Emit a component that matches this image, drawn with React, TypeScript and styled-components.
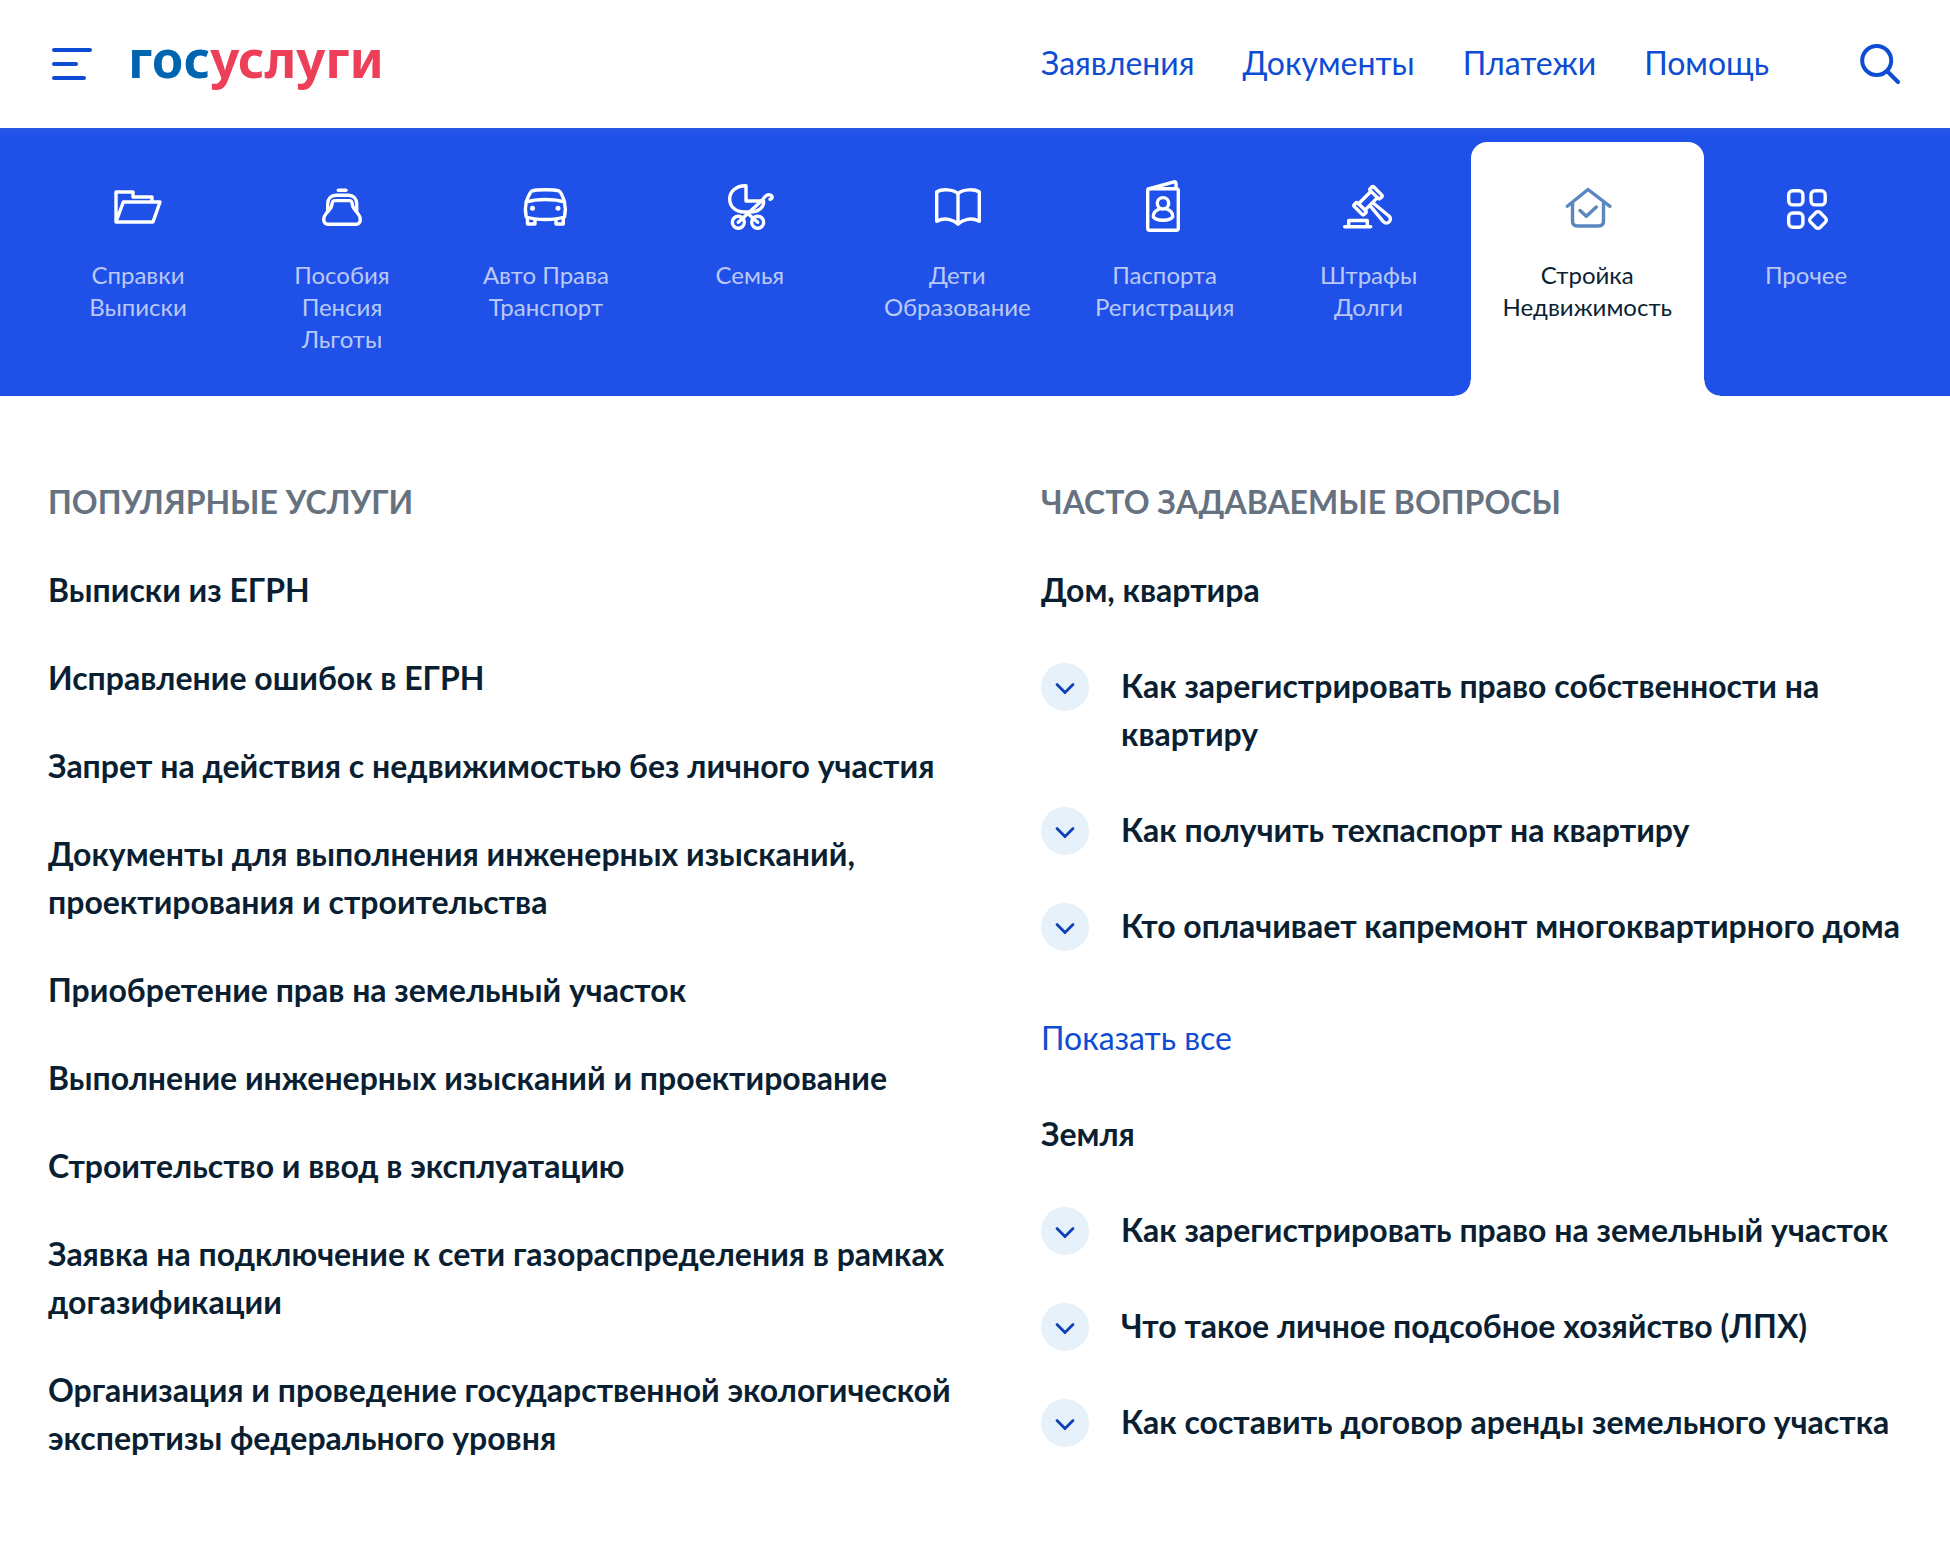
import React from "react";
import styled, { createGlobalStyle } from "styled-components";

const blue = "#0d4cd3";
const band = "#1f51e8";
const ink = "#0b1f33";

const GlobalStyle = createGlobalStyle`
  *, *::before, *::after { box-sizing: border-box; }
  body {
    margin: 0;
    background: #fff;
    color: ${ink};
    font-family: Lato, "Open Sans", sans-serif;
    font-size: 32px;
    line-height: 48px;
  }
  h1, h2, h3, ul { margin: 0; padding: 0; font: inherit; }
  ul { list-style: none; }
  a { color: inherit; text-decoration: none; }
  button { margin: 0; padding: 0; border: 0; background: none; color: inherit; font: inherit; cursor: pointer; }
  svg { display: block; }
`;

const Header = styled.header`
  display: grid;
  grid-template-columns: 1fr 1fr;
  align-items: center;
  height: 128px;
  padding: 0 48px;
`;

const Brand = styled.div`
  display: flex;
  align-items: center;
  gap: 32px;
`;

const IconButton = styled.button`
  flex: none;
  display: block;
  color: ${blue};
`;

const Logo = styled.a`
  padding-bottom: 12px;
  font-family: "Noto Sans", sans-serif;
  font-size: 51px;
  font-weight: 700;
  line-height: 64px;
  color: #0065b1;

  span { color: #ee3f58; }
`;

const HeaderRight = styled.div`
  display: flex;
  align-items: center;
  justify-content: space-between;
  padding-left: 66px;
`;

const MainNav = styled.nav`
  display: flex;
  gap: 48px;
  padding-bottom: 2px;
  color: ${blue};
`;

const Band = styled.nav`
  display: flex;
  padding: 14px 42px 0 36px;
  background: linear-gradient(#2857e7, ${band} 8px);
`;

const Tab = styled.button<{ $active?: boolean }>`
  position: relative;
  flex: 1 1 0;
  display: flex;
  flex-direction: column;
  align-items: center;
  gap: 19px;
  padding: 34px 32px 41px;
  border-radius: 16px 16px 0 0;
  background: ${(p) => (p.$active ? "#fff" : "transparent")};

  &::before,
  &::after {
    content: ${(p) => (p.$active ? '""' : "none")};
    position: absolute;
    bottom: 0;
    width: 16px;
    height: 16px;
  }
  &::before {
    right: 100%;
    background: radial-gradient(circle at 0 0, transparent 15px, #fff 16px);
  }
  &::after {
    left: 100%;
    background: radial-gradient(circle at 100% 0, transparent 15px, #fff 16px);
  }
`;

const TabIcon = styled.svg<{ $active?: boolean }>`
  width: 64px;
  height: 64px;
  fill: none;
  stroke: ${(p) => (p.$active ? "#5a87bd" : "#fff")};
  stroke-width: 3.4;
  stroke-linecap: round;
  stroke-linejoin: round;
`;

const TabLabel = styled.span<{ $active?: boolean }>`
  min-height: 96px;
  font-size: 24px;
  line-height: 32px;
  text-align: center;
  white-space: pre;
  color: ${(p) => (p.$active ? ink : "rgba(255, 255, 255, 0.7)")};
`;

const Content = styled.main`
  display: grid;
  grid-template-columns: 1fr 1fr;
  padding: 82px 48px 72px;
`;

const Popular = styled.section`
  display: flex;
  flex-direction: column;
  gap: 40px;
`;

const Faq = styled.section`
  display: flex;
  flex-direction: column;
  gap: 48px;
  padding-left: 66px;
`;

const FaqTop = styled.div`
  display: flex;
  flex-direction: column;
  gap: 40px;
`;

const SectionTitle = styled.h2`
  color: #66727f;
  font-weight: 700;
  text-transform: uppercase;
`;

const ServiceList = styled.ul`
  display: flex;
  flex-direction: column;
  gap: 40px;
  font-weight: 700;
`;

const Topic = styled.h3`
  font-weight: 700;
`;

const QuestionList = styled.ul`
  display: flex;
  flex-direction: column;
  gap: 48px;
`;

const Question = styled.button`
  display: flex;
  align-items: flex-start;
  gap: 32px;
  font-weight: 700;
  text-align: left;
`;

const Chevron = styled.span`
  flex: none;
  display: grid;
  place-items: center;
  width: 48px;
  height: 48px;
  margin: 1px 0 -1px;
  border-radius: 50%;
  background: #e6f1fa;
  color: #0d3fb8;
`;

const ShowAll = styled.a`
  align-self: flex-start;
  padding-top: 16px;
  color: ${blue};
`;

interface TabData {
  label: string;
  active?: boolean;
  icon: React.ReactNode;
}

const tabs: TabData[] = [
  {
    label: "Справки\nВыписки",
    icon: (
      <>
        <path d="M46 25.500V21H27V16H10V46L17.300 26H54L47 46H10" />
      </>
    ),
  },
  {
    label: "Пособия\nПенсия\nЛьготы",
    icon: (
      <>
        <path d="M28.300 14.300H36" />
        <path d="M17.700 34.500V28C17.700 22.500 21 19.300 26 19.300H38.500C43.500 19.300 46.700 22.500 46.700 28V34.500" />
        <path d="M25 24.600H39.500C42 24.600 42 26 42.300 28.500C42.500 32.500 44.500 33.500 47.500 37C50 40 50.300 42 50.300 43.500C50.300 46.500 48.500 48.300 46 48.300H18C15.500 48.300 13.700 46.500 13.700 43.500C13.700 42 14 40 16.500 37C19.500 33.500 21.700 32.500 22 28.500C22.200 26 22.500 24.600 25 24.600Z" />
      </>
    ),
  },
  {
    label: "Авто Права\nТранспорт",
    icon: (
      <>
        <path d="M12.200 26C14 21 15.500 16.500 18 15C22 13.300 41 13.300 45 15C47.500 16.500 49 21 50.500 26" />
        <path d="M12.200 26C11.300 30 11.300 37 12.200 41C22 44.300 40.500 44.300 50.500 41C51.400 37 51.400 30 50.500 26C40 22.600 23 22.600 12.200 26Z" />
        <path d="M13.500 42V48H21V44M42 44V48H49.300V42" />
        <g fill="#fff" stroke="none">
          <circle cx="18.500" cy="32.300" r="2.500" />
          <circle cx="44" cy="32.300" r="2.500" />
        </g>
      </>
    ),
  },
  {
    label: "Семья",
    icon: (
      <>
        <path d="M28 9.700C18 9.300 11.700 16 11.700 23C11.700 30.500 17.500 36 26 36H32C40 36 46 32 45.600 25H28Z" />
        <path d="M20.300 46.300L44.500 24C46.500 20.500 48 18.600 51 18.600C55 19 55 23 52 23.300" />
        <path d="M30.300 38L39.700 46.300" />
        <circle cx="20.300" cy="46.300" r="6" />
        <circle cx="39.700" cy="46.300" r="6" />
      </>
    ),
  },
  {
    label: "Дети\nОбразование",
    icon: (
      <path d="M33 48.300V17.700C28 12.700 16 13 11.700 16V45.300C20 41 28 43.500 33 48C38 43.500 46 41 54.300 45.300V16C50 13 38 12.700 33 17.700" />
    ),
  },
  {
    label: "Паспорта\nРегистрация",
    icon: (
      <>
        <rect x="14.700" y="12.800" width="30.600" height="41.500" rx="2" />
        <path d="M15.500 13L41 5.800Q43 5.500 43 7.500V12.500" />
        <circle cx="30" cy="27.300" r="5.700" />
        <path d="M26.500 33C22.500 34.500 20.300 37 20.300 40C20.300 42.800 25 44.300 30 44.300S39.700 42.800 39.700 40C39.700 37 37.500 34.500 33.500 33" />
      </>
    ),
  },
  {
    label: "Штрафы\nДолги",
    icon: (
      <>
        <path d="M7.700 50.700H33.700M11.700 50V44.500H30.300V50" />
        <g transform="translate(31 24.700) rotate(45)">
          <rect x="-7" y="-13.800" width="14" height="5" rx="1.500" />
          <rect x="-7" y="8.800" width="14" height="5" rx="1.500" />
          <path d="M-4.500 -8.800V8.800M4.500 -8.800V8.800M4.500 -2L26 -4A4 4 0 0 1 26 4L4.500 2" />
        </g>
      </>
    ),
  },
  {
    label: "Стройка\nНедвижимость",
    active: true,
    icon: (
      <>
        <path d="M12.300 30.300L33 13.500L55 30.300" />
        <path d="M17.500 27V45Q17.500 50 22.500 50H43.500Q48.500 50 48.500 45V27" />
        <path d="M25 34.500L31.300 40.300L41.300 31" />
      </>
    ),
  },
  {
    label: "Прочее",
    icon: (
      <>
        <rect x="14.700" y="14.700" width="14.200" height="14.200" rx="4" />
        <rect x="37" y="14.700" width="14.200" height="14.200" rx="4" />
        <rect x="14.700" y="37" width="14.200" height="14.200" rx="4" />
        <rect x="37.250" y="37.250" width="13.500" height="13.500" rx="3" transform="rotate(45 44 44)" />
      </>
    ),
  },
];

const services = [
  "Выписки из ЕГРН",
  "Исправление ошибок в ЕГРН",
  "Запрет на действия с недвижимостью без личного участия",
  "Документы для выполнения инженерных изысканий, проектирования и строительства",
  "Приобретение прав на земельный участок",
  "Выполнение инженерных изысканий и проектирование",
  "Строительство и ввод в эксплуатацию",
  "Заявка на подключение к сети газораспределения в рамках догазификации",
  "Организация и проведение государственной экологической экспертизы федерального уровня",
];

const homeQuestions = [
  "Как зарегистрировать право собственности на квартиру",
  "Как получить техпаспорт на квартиру",
  "Кто оплачивает капремонт многоквартирного дома",
];

const landQuestions = [
  "Как зарегистрировать право на земельный участок",
  "Что такое личное подсобное хозяйство (ЛПХ)",
  "Как составить договор аренды земельного участка",
];

function Questions({ items }: { items: string[] }) {
  return (
    <QuestionList>
      {items.map((text) => (
        <li key={text}>
          <Question type="button" aria-expanded="false">
            <Chevron>
              <svg width="24" height="24" viewBox="0 0 24 24" fill="none" stroke="currentColor" strokeWidth="2.800" strokeLinecap="round" aria-hidden="true">
                <path d="M4 9.500L12 17.500L20 9.500" />
              </svg>
            </Chevron>
            <span>{text}</span>
          </Question>
        </li>
      ))}
    </QuestionList>
  );
}

export default function App() {
  return (
    <>
      <GlobalStyle />
      <Header>
        <Brand>
          <IconButton type="button" aria-label="Меню">
            <svg width="48" height="48" viewBox="0 0 48 48" stroke="currentColor" strokeWidth="4" strokeLinecap="round">
              <path d="M6 10H42M6 24H28M6 38H36" />
            </svg>
          </IconButton>
          <Logo href="#">
            гос<span>услуги</span>
          </Logo>
        </Brand>
        <HeaderRight>
          <MainNav>
            <a href="#applications">Заявления</a>
            <a href="#documents">Документы</a>
            <a href="#payments">Платежи</a>
            <a href="#help">Помощь</a>
          </MainNav>
          <IconButton type="button" aria-label="Поиск">
            <svg width="44" height="44" viewBox="0 0 44 44" fill="none" stroke="currentColor" strokeWidth="4" strokeLinecap="round">
              <circle cx="18.700" cy="18.500" r="14.500" />
              <path d="M29.500 29.500L40 40" />
            </svg>
          </IconButton>
        </HeaderRight>
      </Header>

      <Band aria-label="Категории">
        {tabs.map((tab) => (
          <Tab key={tab.label} type="button" $active={tab.active} aria-pressed={!!tab.active}>
            <TabIcon viewBox="0 0 64 64" $active={tab.active} aria-hidden="true">
              {tab.icon}
            </TabIcon>
            <TabLabel $active={tab.active}>{tab.label}</TabLabel>
          </Tab>
        ))}
      </Band>

      <Content>
        <Popular>
          <SectionTitle>Популярные услуги</SectionTitle>
          <ServiceList>
            {services.map((text) => (
              <li key={text}>
                <a href="#service">{text}</a>
              </li>
            ))}
          </ServiceList>
        </Popular>
        <Faq>
          <FaqTop>
            <SectionTitle>Часто задаваемые вопросы</SectionTitle>
            <Topic>Дом, квартира</Topic>
          </FaqTop>
          <Questions items={homeQuestions} />
          <ShowAll href="#all">Показать все</ShowAll>
          <Topic>Земля</Topic>
          <Questions items={landQuestions} />
        </Faq>
      </Content>
    </>
  );
}
